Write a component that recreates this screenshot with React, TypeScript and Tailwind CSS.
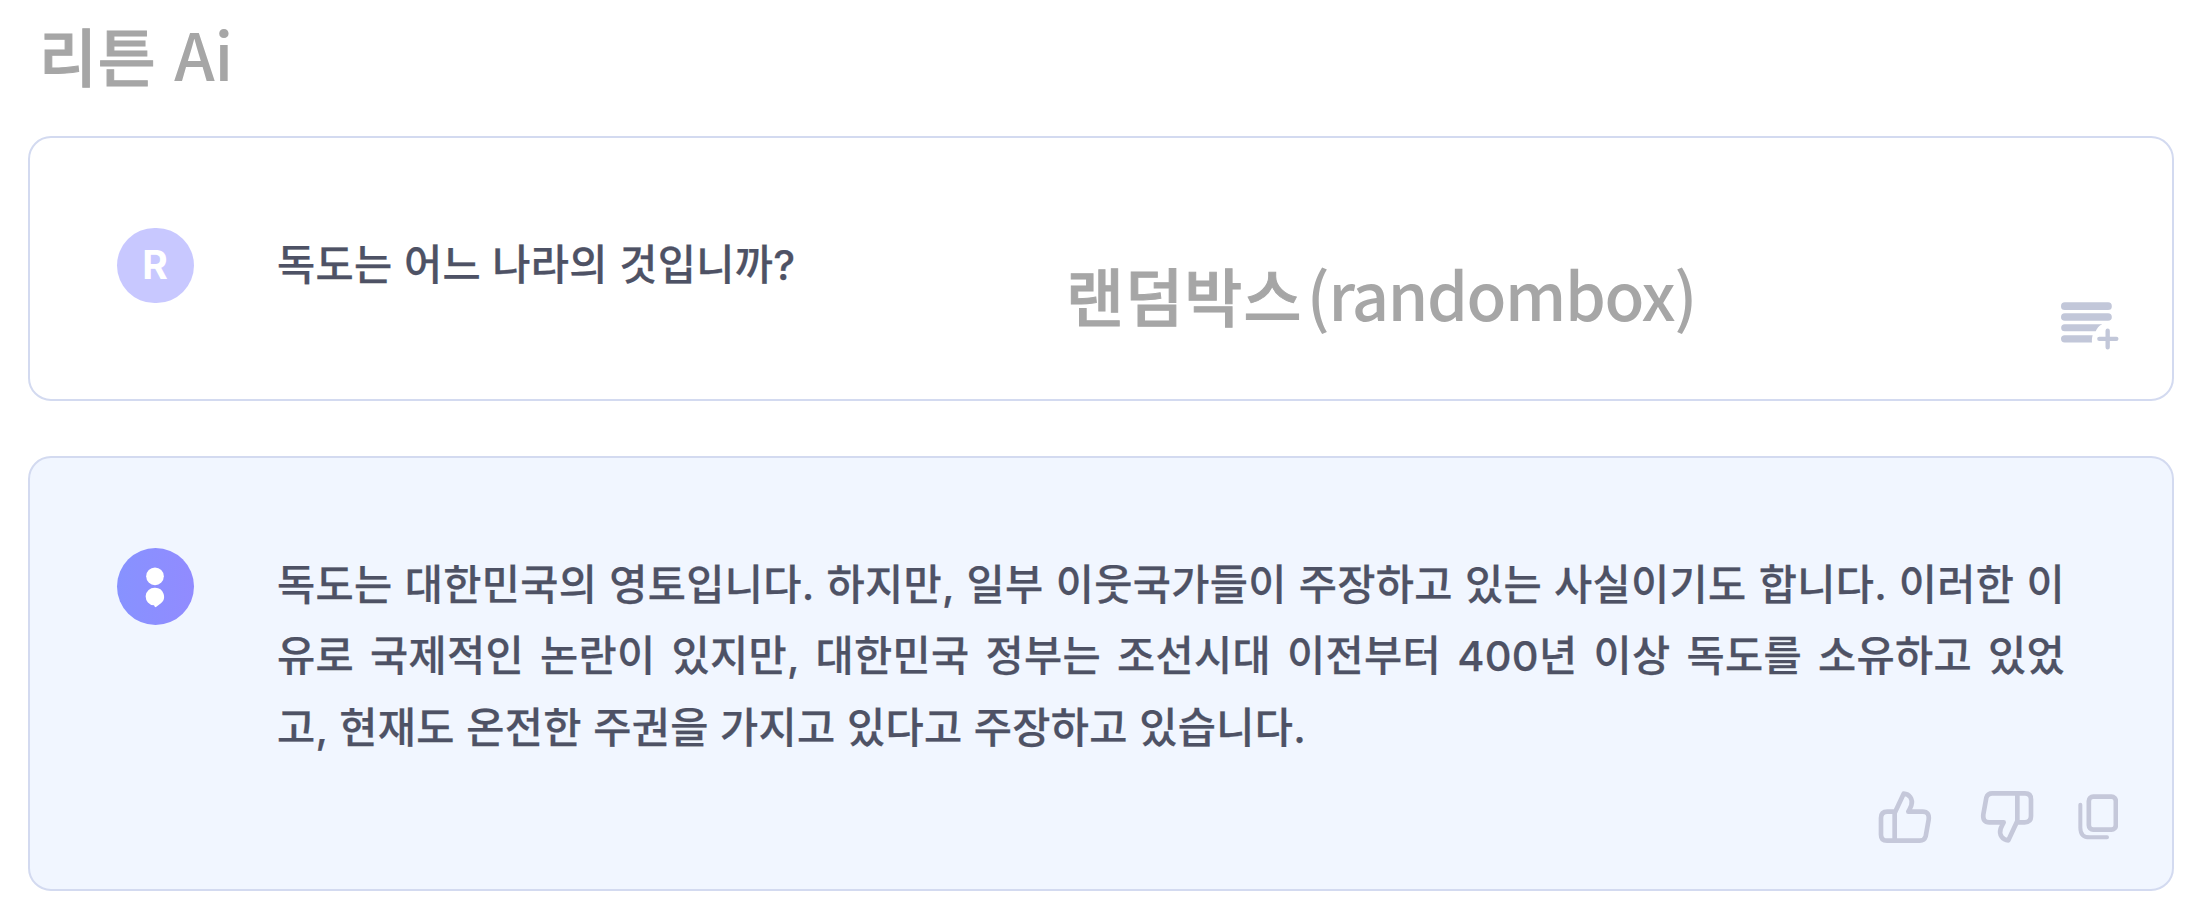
import React from 'react';

interface MessageCardProps {
  className: string;
  avatar: React.ReactNode;
  actions: React.ReactNode;
  children: React.ReactNode;
}

const answerLines = [
  '독도는 대한민국의 영토입니다. 하지만, 일부 이웃국가들이 주장하고 있는 사실이기도 합니다. 이러한 이',
  '유로 국제적인 논란이 있지만, 대한민국 정부는 조선시대 이전부터 400년 이상 독도를 소유하고 있었',
  '고, 현재도 온전한 주권을 가지고 있다고 주장하고 있습니다.',
];

const ListPlusIcon = () => (
  <svg width="58" height="48" viewBox="0 0 174 144" fill="none" stroke="#c2c7d9" strokeLinecap="round">
    <path d="M11.5 12.5H141M11.5 45H141" strokeWidth="23" />
    <path d="M11 66.500H124C113 71 108 79 104 87.500H11a10.500 10.500 0 0 1 0-21Z" fill="#c2c7d9" stroke="none" />
    <path d="M11 99.500H95C93 106 92 114 93 121.500H11a11 11 0 0 1 0-22Z" fill="#c2c7d9" stroke="none" />
    <path d="M115 110.500H166M140 86V136" strokeWidth="13" />
  </svg>
);

const ThumbIcon = ({ className }: { className?: string }) => (
  <svg
    className={className}
    width="54"
    height="52"
    viewBox="0 0 162 156"
    fill="none"
    stroke="#c5c8da"
    strokeWidth="14"
    strokeLinejoin="round"
  >
    <path d="M50 62H28Q9 62 9 81V131Q9 149 27 149H125Q139 149 143 136L152 86Q155 62 134 62H91Q96 53 100 43C106 24 94 9 77 8L50 66V149" />
  </svg>
);

const CopyIcon = () => (
  <svg width="40" height="46" viewBox="0 0 120 138" fill="none" stroke="#c5c8da" strokeWidth="12">
    <rect x="32.500" y="8" width="81" height="99" rx="13" strokeWidth="14" />
    <path d="M7 32V101Q7 130 35 130H87" strokeLinecap="round" />
  </svg>
);

const MessageCard: React.FC<MessageCardProps> = ({ className, avatar, actions, children }) => (
  <section className={`relative flex rounded-[23px] border-2 border-[#d3daf0] pl-[87px] ${className}`}>
    {avatar}
    <div className="mt-[2px] ml-[83px] w-[1788px] text-[41.500px] leading-[71.400px] font-medium tracking-[0.32px] text-[#4e5265] [-webkit-text-stroke:0.25px]">
      {children}
    </div>
    {actions}
  </section>
);

export default function App() {
  return (
    <main className="relative h-[918px] w-[2199px] overflow-hidden bg-white font-['Inter','Noto_Sans_CJK_KR',sans-serif]">
      <h1 className="h-[136px] pt-[4px] pl-[39px] font-['Noto_Sans_CJK_KR',sans-serif] text-[65px] leading-[98px] font-medium text-[#a6a6a6]">
        <span className="mr-[3px] text-[63px] tracking-[0.8px] [-webkit-text-stroke:1px]">리튼</span> Ai
      </h1>

      <div className="ml-[28px] flex w-[2146px] flex-col gap-[55px]">
        <MessageCard
          className="h-[265px] bg-white pt-[90px]"
          avatar={
            <div className="flex h-[75px] w-[77px] items-center justify-center rounded-full bg-[#c8c8ff] pr-px text-[39px] font-bold text-white">
              R
            </div>
          }
          actions={
            <button className="absolute right-[53px] bottom-[49px]">
              <ListPlusIcon />
            </button>
          }
        >
          <p className="whitespace-nowrap">독도는 어느 나라의 것입니까?</p>
        </MessageCard>

        <MessageCard
          className="h-[435px] bg-[#f1f6ff] pt-[90px]"
          avatar={
            <div className="flex h-[77px] w-[77px] items-center justify-center rounded-full bg-linear-to-r from-[#8792ff] to-[#918bff] pr-px">
              <svg width="20" height="42" viewBox="0 0 60 126" fill="white">
                <circle cx="30" cy="31" r="26.5" />
                <path d="M30 65a26.500 26.500 0 0 1 16 48L33 123Q29 125 27 118A26.500 26.500 0 0 1 30 65Z" />
              </svg>
            </div>
          }
          actions={
            <div className="absolute right-[54px] bottom-[46px] flex items-center">
              <button className="mr-[48px]">
                <ThumbIcon />
              </button>
              <button className="mr-[44px]">
                <ThumbIcon className="rotate-180" />
              </button>
              <button>
                <CopyIcon />
              </button>
            </div>
          }
        >
          {answerLines.map((line, i) => (
            <p
              key={i}
              className={i < 2 ? 'whitespace-nowrap [text-align-last:justify]' : 'whitespace-nowrap'}
            >
              {line}
            </p>
          ))}
        </MessageCard>
      </div>

      <span className="absolute top-[244px] left-[1066px] font-['Noto_Sans_CJK_KR',sans-serif] text-[65px] leading-[98px] font-medium whitespace-nowrap text-[#a6a6a6]">
        <span className="text-[63px] tracking-[1.200px] [-webkit-text-stroke:1px]">랜덤박스</span>
        <span className="ml-[4px] tracking-[-1.400px]">(randombox)</span>
      </span>
    </main>
  );
}
